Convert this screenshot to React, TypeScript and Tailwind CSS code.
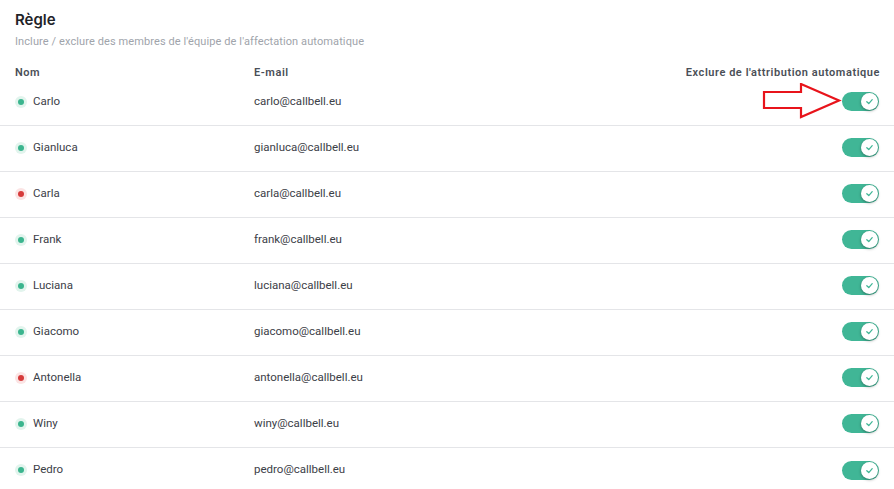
import React from "react";

type Member = { name: string; email: string; online: boolean };

const members: Member[] = [
  { name: "Carlo", email: "carlo@callbell.eu", online: true },
  { name: "Gianluca", email: "gianluca@callbell.eu", online: true },
  { name: "Carla", email: "carla@callbell.eu", online: false },
  { name: "Frank", email: "frank@callbell.eu", online: true },
  { name: "Luciana", email: "luciana@callbell.eu", online: true },
  { name: "Giacomo", email: "giacomo@callbell.eu", online: true },
  { name: "Antonella", email: "antonella@callbell.eu", online: false },
  { name: "Winy", email: "winy@callbell.eu", online: true },
  { name: "Pedro", email: "pedro@callbell.eu", online: true },
];

const Toggle = () => (
  <div className="w-[37px] h-[19px] rounded-full bg-[#40b696] flex items-center justify-end pr-[1px]">
    <div className="w-[17px] h-[17px] rounded-full bg-white shadow-[0_1px_3px_rgba(0,0,0,0.35)] flex items-center justify-center">
      <svg width="9" height="9" viewBox="0 0 10 10" fill="none">
        <path d="M2 5.2 L4.2 7.3 L8 2.9" stroke="#40b696" strokeWidth="1.4" strokeLinecap="round" strokeLinejoin="round" />
      </svg>
    </div>
  </div>
);

const Arrow = () => (
  <svg className="absolute left-[-80px] top-[-9px]" width="80" height="37" viewBox="0 0 80 37" fill="none">
    <polygon
      points="2,9 39,9 39,1 77,17.5 39,34 39,25 2,25"
      stroke="#e8141b"
      strokeWidth="2.2"
      fill="none"
    />
  </svg>
);

export default function App() {
  return (
    <div className="w-[894px] min-h-[489px] bg-white pt-[11px] font-['Roboto','Inter',sans-serif]">
      <h2 className="px-[15px] text-[15px] leading-[18px] font-semibold text-[#1f2328] font-['Inter',sans-serif]">Règle</h2>
      <p className="px-[15px] mt-[6px] text-[11px] leading-[14px] text-[#a0a4ab] tracking-[0.1px]">
        Inclure / exclure des membres de l'équipe de l'affectation automatique
      </p>

      <div className="mt-[18px] px-[15px] flex items-center h-[13px] text-[11px] font-semibold text-[#4a4f57] tracking-[0.55px]">
        <div className="w-[239px]">Nom</div>
        <div className="flex-1">E-mail</div>
        <div className="mr-[-1px]">Exclure de l'attribution automatique</div>
      </div>

      <div>
        {members.map((m, i) => (
          <div
            key={m.name}
            className={`px-[15px] h-[46px] pb-[2px] flex items-center text-[11.5px] text-[#3c4047] ${
              i < members.length - 1 ? "border-b border-[#e4e5e8]" : ""
            }`}
          >
            <div className="w-[239px] flex items-center gap-[6px]">
              <span
                className={`w-[12px] h-[12px] rounded-full flex items-center justify-center ${
                  m.online ? "bg-[#e2f4ed]" : "bg-[#fbe4e4]"
                }`}
              >
                <span className={`w-[6px] h-[6px] rounded-full ${m.online ? "bg-[#3bb58e]" : "bg-[#d63b3b]"}`} />
              </span>
              <span>{m.name}</span>
            </div>
            <div className="flex-1">{m.email}</div>
            <div className="relative">
              {i === 0 && <Arrow />}
              <Toggle />
            </div>
          </div>
        ))}
      </div>
    </div>
  );
}
